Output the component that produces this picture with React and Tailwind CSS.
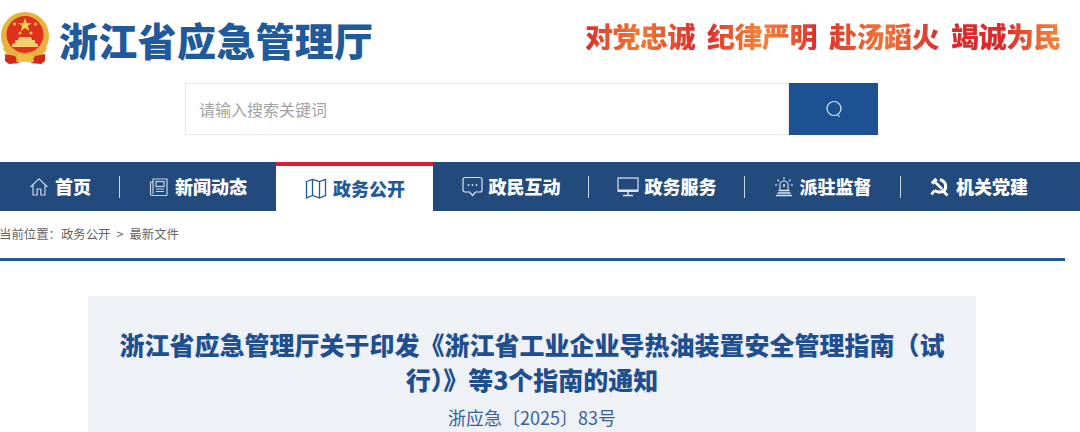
import React from 'react';

const cjk = { fontFamily: '"Noto Sans CJK SC", "Liberation Sans", sans-serif' };

const Emblem = () => (
    <svg width="50" height="52" viewBox="0 0 50 52" className="shrink-0">
        <circle cx="25" cy="24" r="24" fill="#e8b23c" />
        <circle cx="25" cy="22.5" r="18.500" fill="#e0301e" />
        <path d="M25 6l1.700 5h5.300l-4.300 3.100 1.700 5-4.400-3.100-4.400 3.100 1.700-5-4.300-3.100h5.300z" fill="#f6d24a" />
        <circle cx="14.500" cy="12" r="1.500" fill="#f6d24a" />
        <circle cx="35.500" cy="12" r="1.500" fill="#f6d24a" />
        <circle cx="20" cy="21" r="1.500" fill="#f6d24a" />
        <circle cx="31" cy="21" r="1.500" fill="#f6d24a" />
        <path d="M12 35h26v-3l-3-1v-3h-3l-1-3H19l-1 3h-3v3l-3 1z" fill="#f4cf72" />
        <path d="M6 34c3 7 10 10 19 10s16-3 19-10l3 3c-4 7-12 11-22 11S7 44 3 37z" fill="#e8b23c" />
        <path d="M5 42l10 2 4 7-10 1-4-3zM45 42l-10 2-4 7 10 1 4-3z" fill="#d42a1c" />
        <path d="M18 43h14l2 7H16z" fill="#f0c040" />
    </svg>
);

const HomeIcon = () => (
    <svg width="20" height="20" viewBox="0 0 20 20" fill="none" stroke="currentColor" strokeWidth="1.2" className="text-[#c9d6e6]">
        <path d="M1.500 10L10 1.800 18.500 10M4 8v10h4.200v-6h3.600v6H16V8" />
    </svg>
);

const NewsIcon = () => (
    <svg width="20" height="20" viewBox="0 0 20 20" fill="none" stroke="currentColor" strokeWidth="1.200" className="text-[#c9d6e6]">
        <path d="M4 2h14v15.500a1 1 0 0 1-1 1H3a1.500 1.500 0 0 1-1.500-1.500V5H4z" />
        <path d="M4 5v12" />
        <rect x="7" y="4.500" width="8" height="5" />
        <path d="M7 12h8M7 14.500h8" />
    </svg>
);

const MapIcon = () => (
    <svg width="22" height="22" viewBox="0 0 22 22" fill="none" stroke="#1f5a9c" strokeWidth="1.300">
        <path d="M1.500 3.500l6-2 7 2 6-2v16l-6 2.500-7-2.500-6 2.500zM7.500 1.500v16M14.500 3.500v16.500" />
    </svg>
);

const ChatIcon = () => (
    <svg width="21" height="21" viewBox="0 0 21 21" fill="none" stroke="currentColor" strokeWidth="1.200" className="text-[#dfe7f1]">
        <path d="M3 1.500h15a2 2 0 0 1 2 2V14a2 2 0 0 1-2 2h-4.500L10.500 19.500 7.500 16H3a2 2 0 0 1-2-2V3.500a2 2 0 0 1 2-2z" />
        <circle cx="6.500" cy="9" r=".9" fill="currentColor" stroke="none" />
        <circle cx="10.500" cy="9" r=".9" fill="currentColor" stroke="none" />
        <circle cx="14.500" cy="9" r=".9" fill="currentColor" stroke="none" />
    </svg>
);

const ScreenIcon = () => (
    <svg width="22" height="20" viewBox="0 0 22 20" fill="none" className="text-[#dfe7f1]">
        <rect x="1" y="1" width="20" height="13" stroke="currentColor" strokeWidth="1.200" />
        <path d="M1 12.500h20v2.500H1z" fill="currentColor" />
        <path d="M11 15v3M6 18.500h10" stroke="currentColor" strokeWidth="1.300" />
    </svg>
);

const AlarmIcon = () => (
    <svg width="20" height="21" viewBox="0 0 20 21" fill="none" stroke="currentColor" strokeWidth="1.100" className="text-[#dfe7f1]">
        <path d="M6 14V9a4 4 0 0 1 8 0v5" />
        <path d="M10 8v3" strokeWidth="1.500" />
        <path d="M10 1v2.500M3.500 3.500l1.800 1.800M16.500 3.500l-1.800 1.800M1 9h2.500M16.500 9H19" />
        <path d="M4.500 14.500h11M3.500 17h13M2 19.500h16" strokeWidth="1.500" />
    </svg>
);

const PartyIcon = () => (
    <svg width="21" height="20" viewBox="0 0 21 20" fill="none" stroke="#fff">
        {/* sickle */}
        <path d="M11 2.500c4.500 1.500 6.500 5 5.500 8.500-1 3.700-6 5.500-11 2.500" strokeWidth="3.200" />
        <path d="M14.500 14.500l4 4" strokeWidth="2.800" />
        <path d="M5.500 13.500L2.500 17.500" strokeWidth="2.800" />
        {/* hammer */}
        <path d="M6.500 5.500l6.500 6.500" strokeWidth="2.600" />
        <path d="M3 6.500l4.500-4.500" strokeWidth="3.600" />
    </svg>
);

const navItems = [
    { label: '首页', icon: <HomeIcon />, width: 'w-[119px]' },
    { label: '新闻动态', icon: <NewsIcon />, width: 'w-[157px]' },
    { label: '政务公开', icon: <MapIcon />, width: 'w-[157px]', active: true },
    { label: '政民互动', icon: <ChatIcon />, width: 'w-[155px]' },
    { label: '政务服务', icon: <ScreenIcon />, width: 'w-[156px]' },
    { label: '派驻监督', icon: <AlarmIcon />, width: 'w-[156px]' },
    { label: '机关党建', icon: <PartyIcon />, width: 'w-[156px]' },
];

const slogans = [
    { text: '对党忠诚', cls: 'from-[#dc2a2c] via-[#f07a34] to-[#dc2a2c]' },
    { text: '纪律严明', cls: 'from-[#dc2a2c] via-[#f4873a] to-[#dc2a2c]' },
    { text: '赴汤蹈火', cls: 'from-[#e0352c] via-[#f0743a] to-[#dc2a2c]' },
    { text: '竭诚为民', cls: 'from-[#dc2a2c] via-[#dc2a2c] to-[#f4893a]' },
];

const App = () => {
    return (
        <div className="w-[1080px] h-[432px] overflow-hidden bg-white" style={cjk}>
            {/* header */}
            <div className="flex items-center justify-between h-[80px] pb-[2px]">
                <div className="flex items-center">
                    <div className="mt-[-2px]"><Emblem /></div>
                    <h1 className="ml-[9px] text-[39px] leading-none font-black text-[#1f5a9c] tracking-[0.3px] whitespace-nowrap">浙江省应急管理厅</h1>
                </div>
                <div className="mr-[19px] mt-[-6px] text-[28px] leading-none font-black whitespace-nowrap flex gap-[12px] tracking-[-0.5px]">
                    {slogans.map((s) => (
                        <span key={s.text} className={`bg-gradient-to-r bg-clip-text text-transparent ${s.cls}`}>{s.text}</span>
                    ))}
                </div>
            </div>

            {/* search */}
            <div className="flex ml-[185px] w-[693px] h-[52px] mt-[3px]">
                <div className="flex-1 flex items-center pl-[13px] border border-[#e8e8e8] text-[16px] text-[#a3a3a3]">请输入搜索关键词</div>
                <div className="w-[89px] flex items-center justify-center bg-[#1c5291]">
                    <svg width="18" height="18" viewBox="0 0 18 18" fill="none" stroke="#dfe7f1" strokeWidth="1.200">
                        <circle cx="9" cy="8.500" r="7" />
                        <path d="M12.500 14.500l2 2.500" />
                    </svg>
                </div>
            </div>

            {/* nav */}
            <div className="flex h-[49px] mt-[27px] bg-[#234a7d] text-white">
                {navItems.map((item, i) => (
                    <div key={item.label} className={`relative flex items-center justify-center gap-[6px] pl-[1px] ${item.width} ${item.active ? 'bg-white border-t-[4px] border-[#de1c31] text-[#1f5a9c]' : ''}`}>
                        {item.icon}
                        <span className="text-[18px] font-black leading-none pb-[1px]">{item.label}</span>
                        {i !== navItems.length - 1 && !item.active && navItems[i + 1].active !== true && (
                            <span className="absolute right-[-1px] top-[14px] h-[22px] w-px bg-[#c9d6e6]" />
                        )}
                    </div>
                ))}
            </div>

            {/* breadcrumb */}
            <div className="h-[47px] w-[1065px] border-b-[3px] border-[#1f5a9c] box-content">
                <div className="pt-[14px] ml-[-1px] text-[12.4px] leading-[18px] text-[#666] whitespace-nowrap flex">
                    <span>当前位置：政务公开</span>
                    <span className="mx-[6px]">&gt;</span>
                    <span>最新文件</span>
                </div>
            </div>

            {/* article head */}
            <div className="mt-[35px] ml-[88px] w-[888px] h-[140px] bg-[#eef1f6] px-[28px] pt-[31px] text-center">
                <h2 className="text-[25px] leading-[35px] font-black text-[#1f4f8f]">浙江省应急管理厅关于印发《浙江省工业企业导热油装置安全管理指南（试行）》等3个指南的通知</h2>
                <p className="mt-[8px] text-[18px] leading-[24px] text-[#3a6299] whitespace-nowrap">浙应急〔2025〕83号</p>
            </div>
        </div>
    );
};

export default App;
